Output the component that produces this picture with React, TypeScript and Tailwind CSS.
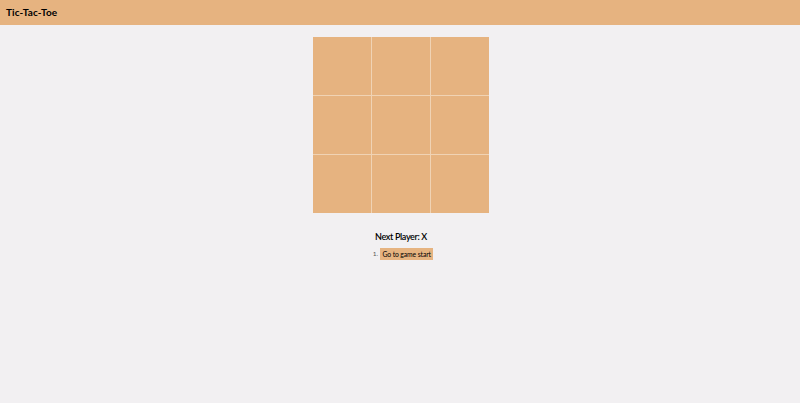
import React from "react";

export default function App() {
  const cells = Array.from({ length: 9 });
  return (
    <div className="min-h-[403px] w-[800px] bg-[#f2f0f2]" style={{ fontFamily: "'Lato', 'DejaVu Sans', sans-serif" }}>
      <header className="h-[25px] bg-[#e6b380] flex items-center px-[6px]">
        <h1 className="text-[10px] font-bold text-black tracking-[0.1px]">Tic-Tac-Toe</h1>
      </header>
      <div className="flex flex-col items-center pt-[12px]">
        <div className="ml-[2px] grid grid-cols-[58px_58px_58px] grid-rows-[58px_58px_58px] gap-px bg-[#f0d3b4]">
          {cells.map((_, i) => (
            <button key={i} className="bg-[#e6b380]" />
          ))}
        </div>
        <div className="mt-[19px] ml-[2px] text-[9px] font-semibold text-black leading-none tracking-[-0.35px]">Next Player: X</div>
        <ol className="mt-[7px] flex items-center gap-[2px] text-[6.5px] text-[#555] ml-[6px]">
          <li className="flex items-center gap-[2px]">
            <span>1.</span>
            <button className="h-[12px] w-[53px] bg-[#e6b380] text-black text-[6.8px] leading-none tracking-[-0.1px]">Go to game start</button>
          </li>
        </ol>
      </div>
    </div>
  );
}
